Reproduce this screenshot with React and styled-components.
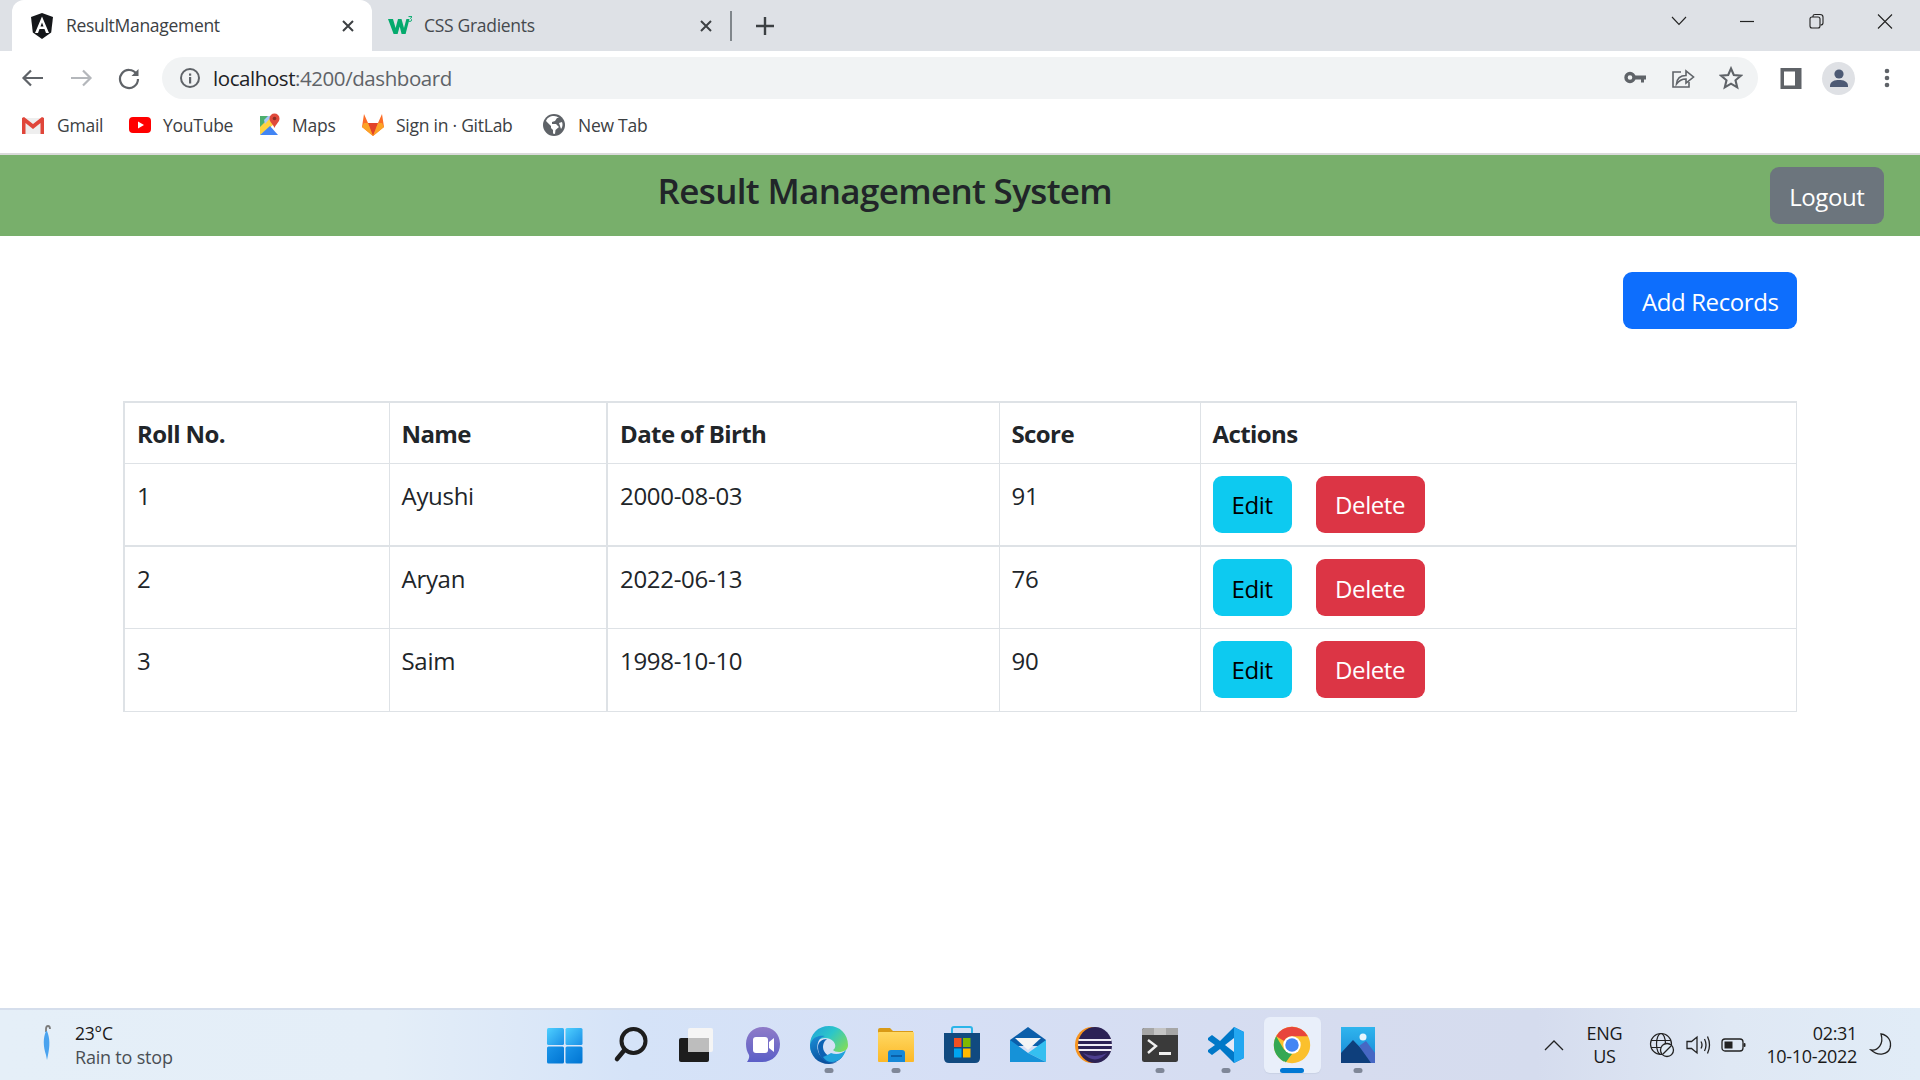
import React from "react";
import styled, { createGlobalStyle } from "styled-components";

const Global = createGlobalStyle`
  html, body { margin: 0; padding: 0; background: #fff; }
  * { box-sizing: border-box; }
  body { font-family: "Open Sans", "Noto Sans", "Liberation Sans", sans-serif; overflow: hidden; }
`;

const Screen = styled.div`
  width: 1920px; height: 1080px; display: flex; flex-direction: column; overflow: hidden; background: #fff;
`;

/* ---------- browser chrome ---------- */
const TabStrip = styled.div`
  height: 51px; flex: none; background: #dee1e6; display: flex; align-items: stretch; padding-left: 12px; color: #3c4043;
`;
const Tab = styled.div`
  width: ${p => p.$w}px; display: flex; align-items: center; padding-left: ${p => p.$pl}px; position: relative;
  background: ${p => (p.$active ? "#fff" : "transparent")};
  border-radius: ${p => (p.$active ? "12px 12px 0 0" : "0")};
`;
const TabTitle = styled.span`
  font-size: 17.5px; line-height: 24px; letter-spacing: -0.3px; margin-left: ${p => p.$ml}px; margin-top: -2px; flex: 1; white-space: nowrap; color: ${p => p.$c};
`;
const TabClose = styled.svg`
  width: 14px; height: 14px; margin-right: ${p => p.$mr}px; flex: none;
`;
const TabSep = styled.div`
  width: 1.5px; height: 30px; background: #80868b; align-self: center; flex: none;
`;
const NewTab = styled.svg`
  width: 20px; height: 20px; align-self: center; margin-left: 23px; flex: none;
`;
const WindowControls = styled.div`
  margin-left: auto; display: flex; align-items: flex-start; padding-right: 1px;
`;
const WinButton = styled.svg`
  width: 68px; height: 42px; flex: none;
`;

const Toolbar = styled.div`
  height: 51px; flex: none; background: #fff; display: flex; align-items: center; padding-left: 9px; padding-top: 3px;
`;
const NavButton = styled.svg`
  width: 48px; height: 24px; flex: none;
`;
const AddressBar = styled.div`
  width: 1596px; height: 42px; margin-left: 9px; border-radius: 21px; background: #f1f3f4; display: flex; align-items: center; padding-left: 16px; flex: none;
`;
const Url = styled.div`
  font-size: 20.5px; letter-spacing: -0.43px; color: #202124; margin-left: 11px; flex: 1; white-space: nowrap;
  span { color: #5f6368; }
`;
const BarIcon = styled.svg`
  width: 24px; height: 24px; flex: none; margin-right: ${p => p.$mr || 0}px; margin-left: ${p => p.$ml || 0}px;
`;
const Avatar = styled.div`
  width: 33px; height: 33px; border-radius: 50%; background: #dfe1e5; display: flex; align-items: center; justify-content: center; overflow: hidden; margin-left: 19px; flex: none;
`;

const Bookmarks = styled.div`
  height: 51px; flex: none; background: #fff; display: flex; align-items: center; padding: 0 0 5px 21px;
`;
const Bookmark = styled.div`
  display: flex; align-items: center; width: ${p => p.$w}px; flex: none; font-size: 17.5px; letter-spacing: -0.25px; color: #3c4043; white-space: nowrap;
  svg { width: 24px; height: 24px; margin-right: ${p => p.$gap || 12}px; flex: none; }
`;
const Rule = styled.div`
  height: 2px; flex: none; background: #dadada;
`;

/* ---------- page ---------- */
const AppBar = styled.header`
  height: 81px; flex: none; background: #78af6b; display: flex; align-items: flex-start; padding: 12px 36px 0 0;
`;
const Title = styled.h1`
  flex: 1; margin: 2px 0 0; text-align: center; font-size: 35px; line-height: 43px; font-weight: 600; letter-spacing: -0.66px; color: #212529;
`;
const Button = styled.button`
  font: inherit; font-size: 24px; line-height: 36px; height: 57px; padding: 2px ${p => p.$px || 18}px 0; letter-spacing: -0.4px;
  border: 0; border-radius: 9px; color: ${p => p.$fg || "#fff"}; background: ${p => p.$bg}; flex: none;
`;
const Main = styled.main`
  flex: 1; padding: 36px 123px 0; min-height: 0;
`;
const AddRow = styled.div`
  display: flex; justify-content: flex-end; margin-bottom: 72px;
`;
const Table = styled.table`
  width: 1672px; table-layout: fixed; border-collapse: collapse; font-size: 24px; line-height: 36px; color: #212529; letter-spacing: -0.3px;
  border-top: 2px solid #dee2e6; border-left: 2px solid #dee2e6;
`;
const Th = styled.th`
  text-align: left; font-weight: 700; padding: 13px 12px 9px; height: 61px; border: 1px solid #dee2e6; vertical-align: top; letter-spacing: -0.6px;
  border-left-width: ${p => (p.$thick ? 2 : 1)}px;
`;
const Td = styled.td`
  padding: 14px 12px 0; border: 1px solid #dee2e6; vertical-align: top; height: ${p => p.$h}px;
  border-left-width: ${p => (p.$thick ? 2 : 1)}px;
  border-bottom-width: ${p => (p.$thickB ? 2 : 1)}px;
`;
const ActionCell = styled(Td)`
  padding-top: 12px;
`;
const Actions = styled.div`
  display: flex; gap: 24px;
`;

/* ---------- taskbar ---------- */
const Taskbar = styled.footer`
  height: 72px; flex: none; display: grid; grid-template-columns: 1fr 858px 1fr; align-items: center;
  background: linear-gradient(90deg, #e5eff8 0%, #e4eef8 20%, #d5e3f8 33%, #d6dff5 50%, #d6dcef 70%, #d5dcee 80%, #dfe8f4 90%, #e1ecf7 100%);
  position: relative;
  &::before { content: ""; position: absolute; left: 0; top: 0; width: 1536px; height: 2px; background: #d5deec; }
`;
const Weather = styled.div`
  display: flex; align-items: center; padding-left: 35px; padding-top: 2px;
`;
const WeatherIcon = styled.svg`
  width: 24px; height: 38px; flex: none; margin-right: 16px; margin-top: -4px;
`;
const WeatherText = styled.div`
  font-size: 17.5px; line-height: 24.5px; letter-spacing: -0.2px; color: #1a1a1a;
  small { display: block; font-size: 18px; color: #4a4f55; }
`;
const Dock = styled.div`
  display: flex; height: 100%; padding-left: 1px;
`;
const DockSlot = styled.div`
  width: 66.1px; flex: none; display: flex; align-items: center; justify-content: center; position: relative;
  &::before {
    content: ${p => (p.$active ? '""' : "none")};
    position: absolute; left: 5px; right: 4px; top: 9px; bottom: 7px; border-radius: 6px; background: #e9effa; box-shadow: 0 1px 1px #c9d1e4;
  }
  &::after {
    content: ${p => (p.$dot || p.$active ? '""' : "none")};
    position: absolute; left: 50%; transform: translateX(-50%); bottom: 7px;
    width: ${p => (p.$active ? 24 : 9)}px; height: 5px; border-radius: 3px; background: ${p => (p.$active ? "#0078d4" : "#7f8798")};
  }
  svg { position: relative; width: ${p => p.$size || 38}px; height: ${p => p.$size || 38}px; margin-top: -15px; top: 8px; }
`;
const Tray = styled.div`
  display: flex; align-items: center; justify-content: flex-end; padding-right: 26px; padding-top: 2px; color: #1a1a1a; font-size: 18px; line-height: 23px; letter-spacing: -0.33px;
`;
const TrayIcon = styled.svg`
  width: ${p => p.$w || 26}px; height: 26px; flex: none; margin-left: ${p => p.$ml || 0}px;
`;
const Lang = styled.div`
  text-align: center; margin-left: 15px; width: 44px;
`;
const Clock = styled.div`
  text-align: right; margin-left: 19px;
`;

/* ---------- icons ---------- */
const Angular = () => (
  <svg width="24" height="26" viewBox="0 0 24 26" style={{ flex: "none" }}>
    <path d="M12 0 L1 4 L2.8 19.5 L12 26 L21.2 19.5 L23 4Z" fill="#15171a" />
    <path fillRule="evenodd" d="M12 3.5 L5 20 H8 L9.5 16 H14.5 L16 20 H19 Z M10.5 13.5 L12 9.5 L13.5 13.5Z" fill="#fff" />
  </svg>
);
const W3 = () => (
  <svg width="24" height="20" viewBox="0 0 24 20" style={{ flex: "none" }}>
    <path d="M0 3 H5 L7.6 12 L10 3 H13.5 L16 12 L18.4 3 H21.5 L17.6 18 H13.6 L11.7 10.5 L9.6 18 H5.6Z" fill="#04aa6d" />
    <path d="M20.5 .6 H24 L22.6 2.4 Q24.2 3.2 23.4 4.8 Q22.2 6 20.4 5" fill="none" stroke="#04aa6d" strokeWidth="1" />
  </svg>
);
const X = ({ mr }) => (
  <TabClose $mr={mr} viewBox="0 0 14 14"><path d="M2 2 L12 12 M12 2 L2 12" stroke="#3c4043" strokeWidth="2" /></TabClose>
);
const Gmail = () => (
  <svg viewBox="0 0 24 24">
    <path d="M1 5 H23 V21 H1Z" fill="#eee" />
    <path d="M1 21 V5 L3 4 L12 11 L21 4 L23 5 V21 H19.5 V10 L12 16 L4.5 10 V21Z" fill="#e0463a" />
  </svg>
);
const Youtube = () => (
  <svg viewBox="0 0 24 24">
    <rect x="1" y="4" width="22" height="16" rx="4" fill="#f00" />
    <path d="M10 8.5 L16 12 L10 15.5Z" fill="#fff" />
  </svg>
);
const Maps = () => (
  <svg viewBox="0 0 24 24">
    <path d="M3 3 H14 V14 L3 14Z" fill="#4caf6e" />
    <path d="M3 14 L14 3 L16 12 L3 22Z" fill="#ffd23f" />
    <path d="M3 22 L13 13 L21 22Z" fill="#4285f4" />
    <path d="M7 7 L11 3 H15 L8 11Z" fill="#a8c7fa" />
    <path d="M17.5 0.5 A5 5 0 0 1 22.5 5.5 C22.5 9 19 11 17.5 15 C16 11 12.5 9 12.5 5.5 A5 5 0 0 1 17.5 .5Z" fill="#e04a3b" />
    <circle cx="17.5" cy="5.5" r="1.8" fill="#8c2f26" />
  </svg>
);
const Gitlab = () => (
  <svg viewBox="0 0 24 24">
    <path d="M12 23 L1 14 L3 1 L7 10 H17 L21 1 L23 14Z" fill="#fc6d26" />
    <path d="M12 23 L7 10 H17Z" fill="#e24329" />
    <path d="M12 23 L1 14 L3 10 H7Z" fill="#fca326" />
    <path d="M12 23 L23 14 L21 10 H17Z" fill="#fca326" />
  </svg>
);
const Globe = () => (
  <svg viewBox="0 0 24 24">
    <circle cx="12" cy="12" r="11" fill="#5f6368" />
    <path d="M12 3 C8 3 5 5 4 8 L9 13 V15 L11 17 V20.5 L13 21 L13.5 17 L17 14 L14 11 H10 V9 L13 8 L15 5 L17 5 C15.5 3.7 14 3 12 3Z" fill="#fff" />
    <path d="M20 9 L17 10 L19 16 C20.5 14 21 11.5 20 9Z" fill="#fff" />
  </svg>
);
const Person = () => (
  <svg width="24" height="24" viewBox="0 0 24 24">
    <circle cx="12" cy="8" r="4.6" fill="#4d5a74" />
    <path d="M3 20 C3 15 8 14 12 14 C16 14 21 15 21 20 V21 H3Z" fill="#4d5a74" />
  </svg>
);

const Windows = () => (
  <svg viewBox="0 0 38 38">
    <defs>
      <linearGradient id="w1" x1="0" y1="0" x2="1" y2="1"><stop offset="0" stopColor="#4fd0ff" /><stop offset="1" stopColor="#1a8fe6" /></linearGradient>
      <linearGradient id="w2" x1="0" y1="0" x2="1" y2="1"><stop offset="0" stopColor="#1b96ea" /><stop offset="1" stopColor="#0074d2" /></linearGradient>
    </defs>
    <rect x="1" y="2" width="17" height="17" rx="1.5" fill="url(#w1)" />
    <rect x="19.5" y="2" width="17" height="17" rx="1.5" fill="url(#w1)" />
    <rect x="1" y="20.5" width="17" height="17" rx="1.5" fill="url(#w2)" />
    <rect x="19.5" y="20.5" width="17" height="17" rx="1.5" fill="url(#w2)" />
  </svg>
);
const SearchIc = () => (
  <svg viewBox="0 0 38 38">
    <circle cx="21.5" cy="15" r="12" fill="none" stroke="#1d1d1d" strokeWidth="4" />
    <path d="M12.5 24 L5 33" stroke="#1d1d1d" strokeWidth="4.5" strokeLinecap="round" />
  </svg>
);
const TaskView = () => (
  <svg viewBox="0 0 38 38">
    <rect x="1" y="12" width="30" height="24" rx="2" fill="#1d1d1d" />
    <rect x="10" y="2" width="25" height="24" rx="2" fill="#f5f5f5" />
    <rect x="10" y="12" width="21" height="14" fill="#bdbdbd" />
  </svg>
);
const Chat = () => (
  <svg viewBox="0 0 38 38">
    <defs><linearGradient id="c1" x1="0" y1="0" x2="0" y2="1"><stop offset="0" stopColor="#8f7bc8" /><stop offset="1" stopColor="#5b5fc7" /></linearGradient></defs>
    <path d="M19 1 C29 1 36 8 36 18 C36 28 29 36 18 36 H3 C5 33 5.5 31 5 29 C3 26 2 22 2 18 C2 8 9 1 19 1Z" fill="url(#c1)" />
    <rect x="9" y="11" width="15" height="16" rx="3" fill="#fff" />
    <path d="M25 16 L30 12 V26 L25 22Z" fill="#fff" />
  </svg>
);
const Edge = () => (
  <svg viewBox="0 0 40 40">
    <defs>
      <linearGradient id="e1" x1="0" y1="0" x2="1" y2="0.7"><stop offset="0" stopColor="#1f9fdc" /><stop offset="0.5" stopColor="#2cc6c9" /><stop offset="1" stopColor="#7edb5c" /></linearGradient>
      <linearGradient id="e2" x1="0" y1="0" x2="0.4" y2="1"><stop offset="0" stopColor="#1b8fd8" /><stop offset="1" stopColor="#0a4f9c" /></linearGradient>
    </defs>
    <path d="M20 1 C31 1 39 9 39 20 C39 25 35 27 30 27 C27 27 25 26 24 25 C27 23 27 19 24 16 C20 12 12 12 8 16 C5 19 3 24 4 30 C2 27 1 24 1 20 C1 9 9 1 20 1Z" fill="url(#e1)" />
    <path d="M1 20 C3 12 10 10 16 11 C10 12 7 19 9 26 C11 33 19 39 28 37 C25 38 23 39 20 39 C9 39 1 31 1 20Z" fill="url(#e2)" />
    <path d="M9 22 C9 17 13 14 18 14 C14 17 13 22 15 26 C18 32 26 35 35 29 C32 35 26 38 22 38 C15 38 9 31 9 22Z" fill="#0c62b4" />
    <path d="M22 28 C27 30 33 29 37 25 C35 32 29 37 23 37 C19 37 16 35 14 32 C17 31 20 29 22 28Z" fill="#20a3dc" />
  </svg>
);
const Folder = () => (
  <svg viewBox="0 0 38 38">
    <defs><linearGradient id="f1" x1="0" y1="0" x2="0" y2="1"><stop offset="0" stopColor="#ffd862" /><stop offset="1" stopColor="#fcb827" /></linearGradient></defs>
    <path d="M1 4 Q1 2 3 2 H13 L16 5 H36 V12 H1Z" fill="#d99a16" />
    <rect x="1" y="6" width="36" height="30" rx="1" fill="url(#f1)" />
    <path d="M11 36 V27 Q11 24 14 24 H25 Q28 24 28 27 V36Z" fill="#1588d8" />
    <rect x="14" y="29" width="11" height="2" fill="#0a5fa8" />
  </svg>
);
const Store = () => (
  <svg viewBox="0 0 38 38">
    <path d="M9 8 V3 Q9 1 11 1 H27 Q29 1 29 3 V8" fill="none" stroke="#2cb5e9" strokeWidth="2" />
    <path d="M1 7 H37 V32 Q37 37 32 37 H6 Q1 37 1 32Z" fill="#114a80" />
    <rect x="11" y="12" width="7.5" height="9" fill="#f25022" />
    <rect x="20" y="12" width="7.5" height="9" fill="#7fba00" />
    <rect x="11" y="22.5" width="7.5" height="9" fill="#00a4ef" />
    <rect x="20" y="22.5" width="7.5" height="9" fill="#ffb900" />
  </svg>
);
const Mail = () => (
  <svg viewBox="0 0 38 38">
    <path d="M1 14 L19 1 L37 14 V20 H1Z" fill="#0b5eaa" />
    <path d="M6 12 H32 L19 24Z" fill="#f5f5f5" />
    <path d="M19 27 L37 14 V36Z" fill="#35bff0" />
    <path d="M1 14 L19 27 L37 36 H1Z" fill="#1692d8" />
  </svg>
);
const Eclipse = () => (
  <svg viewBox="0 0 38 38">
    <ellipse cx="17" cy="19" rx="17" ry="18" fill="#f7941e" />
    <ellipse cx="20" cy="19" rx="17" ry="18" fill="#2c2255" />
    <path d="M3.5 13 H36.5 V15 H3.5Z M3 18 H37 V20 H3Z M3.5 23 H36.5 V25 H3.5Z" fill="#f0eef6" />
    <path d="M8 27 Q20 40 32 27 Q20 33 8 27Z" fill="#4d3f8f" />
  </svg>
);
const Terminal = () => (
  <svg viewBox="0 0 38 38">
    <rect x="1" y="2" width="36" height="34" rx="2.5" fill="#3a3a3a" />
    <path d="M1 4.5 Q1 2 3.5 2 H37 V9 H1Z" fill="#a6a6a6" />
    <rect x="13" y="2" width="12" height="7" fill="#c4c4c4" />
    <path d="M7 14 L15 20 L7 27" fill="none" stroke="#f0f0f0" strokeWidth="2.4" />
    <rect x="18" y="26" width="12" height="3" fill="#f0f0f0" />
  </svg>
);
const VSCode = () => (
  <svg viewBox="0 0 38 38">
    <path d="M27 1 L37 6 V32 L27 37 L13 23 L5 29 L1 26 V24 L8 19 L1 14 V12 L5 9 L13 15Z" fill="#0078c8" />
    <path d="M27 1 L37 6 V32 L27 37 L27 1Z" fill="#23a7f1" />
    <path d="M18 19 L27 12 V26Z" fill="#e4e9f8" />
  </svg>
);
const Chrome = () => (
  <svg viewBox="0 0 48 48">
    <circle cx="24" cy="24" r="23" fill="#fbc02d" />
    <path d="M24 1 A23 23 0 0 1 44 13 H24 A11 11 0 0 0 14 19 L4 13 A23 23 0 0 1 24 1Z" fill="#e8453c" />
    <path d="M4 13 L14 30 A11 11 0 0 0 24 35 L14 45 A23 23 0 0 1 4 13Z" fill="#34a853" />
    <path d="M14 30 L24 35 L16 46 L4 24Z" fill="#34a853" />
    <circle cx="24" cy="24" r="11" fill="#fff" />
    <circle cx="24" cy="24" r="8.5" fill="#4285f4" />
  </svg>
);
const Photos = () => (
  <svg viewBox="0 0 38 38">
    <defs><linearGradient id="p1" x1="0" y1="0" x2="0" y2="1"><stop offset="0" stopColor="#2fb5ee" /><stop offset="1" stopColor="#1685d4" /></linearGradient></defs>
    <rect x="2" y="1" width="34" height="36" fill="url(#p1)" />
    <circle cx="24" cy="11" r="3.5" fill="#e8f5fd" />
    <path d="M2 37 V27 L14 14 L36 37Z" fill="#0e3f7c" />
    <path d="M20 20 L27 15 L36 27 V37 H32Z" fill="#4667c4" />
  </svg>
);

const dock = [
  { el: <Windows /> }, { el: <SearchIc /> }, { el: <TaskView /> }, { el: <Chat /> }, { el: <Edge />, dot: 1, size: 40 },
  { el: <Folder />, dot: 1 }, { el: <Store /> }, { el: <Mail /> }, { el: <Eclipse /> }, { el: <Terminal />, dot: 1 },
  { el: <VSCode />, dot: 1 }, { el: <Chrome />, active: 1 }, { el: <Photos />, dot: 1 },
];

const rows = [
  { roll: 1, name: "Ayushi", dob: "2000-08-03", score: 91, h: 83, thickB: true },
  { roll: 2, name: "Aryan", dob: "2022-06-13", score: 76, h: 82 },
  { roll: 3, name: "Saim", dob: "1998-10-10", score: 90, h: 83 },
];

export default function App() {
  return (
    <Screen>
      <Global />
      <TabStrip>
        <Tab $active $w={360} $pl={18}>
          <Angular />
          <TabTitle $ml={12} $c="#3c4043">ResultManagement</TabTitle>
          <X mr={17} />
        </Tab>
        <Tab $w={358} $pl={16}>
          <W3 />
          <TabTitle $ml={12} $c="#45494e">CSS Gradients</TabTitle>
          <X mr={17} />
        </Tab>
        <TabSep />
        <NewTab viewBox="0 0 20 20"><path d="M10 1 V19 M1 10 H19" stroke="#3c4043" strokeWidth="2.4" /></NewTab>
        <WindowControls>
          <WinButton viewBox="0 0 68 42"><path d="M25 17 L32 24.5 L39 17" fill="none" stroke="#222" strokeWidth="1.1" /></WinButton>
          <WinButton viewBox="0 0 68 42"><path d="M25 21.5 H39" stroke="#222" strokeWidth="1.2" /></WinButton>
          <WinButton viewBox="0 0 68 42"><rect x="27" y="17" width="10" height="11" rx="2" fill="none" stroke="#222" strokeWidth="1.1" /><path d="M30 17 V16 Q30 14.500 32 14.500 H37 Q40 14.500 40 17 V23 Q40 25 37.500 25" fill="none" stroke="#222" strokeWidth="1.1" /></WinButton>
          <WinButton viewBox="0 0 68 42"><path d="M27 14.500 L41 28.500 M41 14.500 L27 28.500" stroke="#222" strokeWidth="1.1" /></WinButton>
        </WindowControls>
      </TabStrip>

      <Toolbar>
        <NavButton viewBox="0 0 48 24"><path d="M34 12 H15 M22 4.500 L14.500 12 L22 19.500" fill="none" stroke="#5f6368" strokeWidth="2.2" /></NavButton>
        <NavButton viewBox="0 0 48 24"><path d="M14 12 H33 M26 4.500 L33.500 12 L26 19.500" fill="none" stroke="#b4b7bb" strokeWidth="2.2" /></NavButton>
        <NavButton viewBox="0 0 48 24"><path d="M31.500 8 A9 9 0 1 0 33 13" fill="none" stroke="#5f6368" strokeWidth="2.2" /><path d="M33.500 3 V10 H26.500Z" fill="#5f6368" /></NavButton>
        <AddressBar>
          <BarIcon viewBox="0 0 24 24"><circle cx="12" cy="12" r="9" fill="none" stroke="#5f6368" strokeWidth="2" /><rect x="11" y="11" width="2.2" height="6.500" fill="#5f6368" /><rect x="11" y="7.500" width="2.2" height="2.200" fill="#5f6368" /></BarIcon>
          <Url>localhost<span>:4200/dashboard</span></Url>
          <BarIcon $mr={24} viewBox="0 0 24 24"><circle cx="7" cy="11.500" r="4" fill="none" stroke="#5f6368" strokeWidth="3.400" /><path d="M11 9.500 H23 V13.500 H21 V16.500 H18 V13.500 H11Z" fill="#5f6368" /></BarIcon>
          <BarIcon $mr={24} viewBox="0 0 24 24"><path d="M10 6 H2 V21 H18 V16" fill="none" stroke="#5f6368" strokeWidth="1.600" /><path d="M5.500 18 C6 12 10 9.500 15 9.500 V5 L22.500 11 L15 17 V13 C11 13 8 14.500 5.500 18Z" fill="none" stroke="#5f6368" strokeWidth="1.600" /></BarIcon>
          <BarIcon $mr={15} viewBox="0 0 24 24"><path d="M12 2.500 L14.800 9 L22 9.600 L16.500 14.300 L18.200 21.300 L12 17.600 L5.800 21.300 L7.500 14.300 L2 9.600 L9.200 9Z" fill="none" stroke="#5f6368" strokeWidth="2.100" /></BarIcon>
        </AddressBar>
        <BarIcon $ml={21} viewBox="0 0 24 24"><path fillRule="evenodd" d="M1.500 2 H22.500 V23 H1.500Z M5 5.500 V19.500 H16 V5.500Z" fill="#5f6368" /></BarIcon>
        <Avatar><Person /></Avatar>
        <BarIcon $ml={20} viewBox="0 0 24 24"><circle cx="12" cy="5" r="2.300" fill="#5f6368" /><circle cx="12" cy="12" r="2.300" fill="#5f6368" /><circle cx="12" cy="19" r="2.300" fill="#5f6368" /></BarIcon>
      </Toolbar>

      <Bookmarks>
        <Bookmark $w={107}><Gmail />Gmail</Bookmark>
        <Bookmark $w={129} $gap={11}><Youtube />YouTube</Bookmark>
        <Bookmark $w={104} $gap={11}><Maps />Maps</Bookmark>
        <Bookmark $w={181} $gap={11}><Gitlab />Sign in · GitLab</Bookmark>
        <Bookmark $w={120}><Globe />New Tab</Bookmark>
      </Bookmarks>
      <Rule />

      <AppBar>
        <Title>Result Management System</Title>
        <Button $bg="#6c757d" $px={19.5}>Logout</Button>
      </AppBar>

      <Main>
        <AddRow><Button $bg="#0d6efd" $px={18.5}>Add Records</Button></AddRow>
        <Table>
          <colgroup>
            <col style={{ width: 265 }} /><col style={{ width: 218 }} /><col style={{ width: 392 }} /><col style={{ width: 201 }} /><col style={{ width: 596 }} />
          </colgroup>
          <thead>
            <tr>
              <Th>Roll No.</Th><Th>Name</Th><Th $thick>Date of Birth</Th><Th>Score</Th><Th>Actions</Th>
            </tr>
          </thead>
          <tbody>
            {rows.map(r => (
              <tr key={r.roll}>
                <Td $h={r.h} $thickB={r.thickB}>{r.roll}</Td>
                <Td $h={r.h} $thickB={r.thickB}>{r.name}</Td>
                <Td $h={r.h} $thickB={r.thickB} $thick>{r.dob}</Td>
                <Td $h={r.h} $thickB={r.thickB}>{r.score}</Td>
                <ActionCell $h={r.h} $thickB={r.thickB}>
                  <Actions>
                    <Button $bg="#0dcaf0" $fg="#000" $px={19}>Edit</Button>
                    <Button $bg="#dc3545" $px={19.500}>Delete</Button>
                  </Actions>
                </ActionCell>
              </tr>
            ))}
          </tbody>
        </Table>
      </Main>

      <Taskbar>
        <Weather>
          <WeatherIcon viewBox="0 0 24 38">
            <path d="M11 8 V5 Q11 2 13 2 Q15 2 15 5" fill="none" stroke="#7c7c7c" strokeWidth="1.800" />
            <path d="M11 7 C8 14 8 22 11 31 L12 36 L13 31 C15 22 15 14 12 7Z" fill="#4aa3ef" />
          </WeatherIcon>
          <WeatherText>23°C<small>Rain to stop</small></WeatherText>
        </Weather>
        <Dock>
          {dock.map((d, i) => (
            <DockSlot key={i} $dot={d.dot} $active={d.active} $size={d.size}>{d.el}</DockSlot>
          ))}
        </Dock>
        <Tray>
          <TrayIcon viewBox="0 0 26 26"><path d="M4 18 L13 9 L22 18" fill="none" stroke="#222" strokeWidth="1.300" /></TrayIcon>
          <Lang>ENG<br />US</Lang>
          <TrayIcon $ml={23} viewBox="0 0 26 26">
            <circle cx="12" cy="12" r="10.500" fill="none" stroke="#222" strokeWidth="1.200" />
            <ellipse cx="12" cy="12" rx="4.500" ry="10.500" fill="none" stroke="#222" strokeWidth="1.200" />
            <path d="M2 8.500 H22 M2 15.500 H14" stroke="#222" strokeWidth="1.200" />
            <circle cx="18" cy="18" r="6.500" fill="#e0ebf6" stroke="#222" strokeWidth="1.300" />
            <path d="M14 22 L22 14" stroke="#222" strokeWidth="1.300" />
          </TrayIcon>
          <TrayIcon $ml={10} viewBox="0 0 26 26"><path d="M2 9.500 H6.500 L12 5 V21 L6.500 16.500 H2Z M16 9.500 Q18 13 16 16.500 M19.500 7 Q22.500 13 19.500 19 M22.500 4.500 Q26.500 13 22.500 21.500" fill="none" stroke="#222" strokeWidth="1.300" /></TrayIcon>
          <TrayIcon $ml={10} viewBox="0 0 26 26"><rect x="1" y="7" width="21" height="12" rx="3" fill="none" stroke="#222" strokeWidth="1.300" /><rect x="3.500" y="9.500" width="8" height="7" fill="#222" /><rect x="22.500" y="11" width="2" height="4" rx="1" fill="#222" /></TrayIcon>
          <Clock>02:31<br />10-10-2022</Clock>
          <TrayIcon $ml={11} viewBox="0 0 26 26"><path d="M13 2 C20 3 24 9 22 16 C20 22 11 25 3 18 C10 19 16 12 13 2Z" fill="none" stroke="#222" strokeWidth="1.300" /></TrayIcon>
        </Tray>
      </Taskbar>
    </Screen>
  );
}
